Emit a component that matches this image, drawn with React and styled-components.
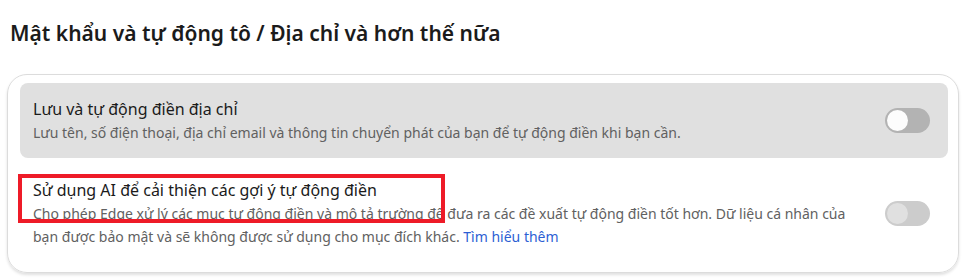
import styled, { createGlobalStyle } from "styled-components";

const GlobalStyle = createGlobalStyle`
  html, body {
    margin: 0;
    padding: 0;
    background: #ffffff;
    font-family: "Noto Sans", "Open Sans", sans-serif;
  }
`;

const settings = [
  {
    id: "address",
    title: "Lưu và tự động điền địa chỉ",
    desc: "Lưu tên, số điện thoại, địa chỉ email và thông tin chuyển phát của bạn để tự động điền khi bạn cần.",
    hovered: true,
  },
  {
    id: "ai",
    title: "Sử dụng AI để cải thiện các gợi ý tự động điền",
    desc: "Cho phép Edge xử lý các mục tự động điền và mô tả trường để đưa ra các đề xuất tự động điền tốt hơn. Dữ liệu cá nhân của bạn được bảo mật và sẽ không được sử dụng cho mục đích khác.",
    link: "Tìm hiểu thêm",
    highlighted: true,
  },
];

export default function App() {
  return (
    <>
      <GlobalStyle />
      <StyledPage>
        <StyledHeading>Mật khẩu và tự động tô / Địa chỉ và hơn thế nữa</StyledHeading>
        <StyledCard>
          {settings.map((item) => (
            <StyledRow key={item.id} $hovered={item.hovered}>
              <StyledTextBlock>
                <StyledRowTitle>{item.title}</StyledRowTitle>
                <StyledRowDesc>
                  {item.desc}
                  {item.link && (
                    <>
                      {" "}
                      <StyledLink href="#">{item.link}</StyledLink>
                    </>
                  )}
                </StyledRowDesc>
              </StyledTextBlock>
              <StyledToggle $hovered={item.hovered}>
                <StyledKnob $hovered={item.hovered} />
              </StyledToggle>
              {item.highlighted && <StyledHighlight />}
            </StyledRow>
          ))}
        </StyledCard>
      </StyledPage>
    </>
  );
}

const StyledPage = styled.div`
  width: 964px;
  height: 279px;
  padding: 13px 5px 0 7px;
  box-sizing: border-box;
`;

const StyledHeading = styled.h1`
  margin: 0 0 21px 3px;
  font-size: 21px;
  line-height: 40px;
  font-weight: 600;
  color: #1b1b1b;
`;

const StyledCard = styled.section`
  width: 952px;
  height: 199px;
  box-sizing: border-box;
  padding: 8px 10px 0 12px;
  border: 1px solid #dcdcdc;
  border-radius: 20px;
  box-shadow: 0 2px 3px rgba(0, 0, 0, 0.12);
  display: flex;
  flex-direction: column;
`;

const StyledRow = styled.div`
  position: relative;
  display: flex;
  align-items: center;
  justify-content: space-between;
  gap: 24px;
  padding: ${(p) => (p.$hovered ? "0 18px 0 13px" : "20px 18px 0 13px")};
  height: ${(p) => (p.$hovered ? "75px" : "auto")};
  background: ${(p) => (p.$hovered ? "#e0e0e0" : "transparent")};
  border-radius: 8px;
`;

const StyledTextBlock = styled.div`
  display: flex;
  flex-direction: column;
  max-width: 822px;
`;

const StyledRowTitle = styled.div`
  font-size: 16px;
  line-height: 24px;
  color: #1b1b1b;
`;

const StyledRowDesc = styled.div`
  font-size: 14px;
  line-height: 23px;
  color: #616161;
`;

const StyledLink = styled.a`
  color: #2d5fd4;
  text-decoration: none;
`;

const StyledToggle = styled.div`
  flex: none;
  width: 45px;
  height: 25px;
  border-radius: 13px;
  background: ${(p) => (p.$hovered ? "#b3b3b3" : "#cccccc")};
  display: flex;
  align-items: center;
  padding-left: 2px;
  box-sizing: border-box;
`;

const StyledKnob = styled.span`
  width: 21px;
  height: 21px;
  border-radius: 50%;
  background: ${(p) => (p.$hovered ? "#fdfdfd" : "#e0e0e0")};
`;

const StyledHighlight = styled.div`
  position: absolute;
  left: -2px;
  top: 16px;
  width: 427px;
  height: 49px;
  box-sizing: border-box;
  border: 4px solid #ee1b28;
  pointer-events: none;
`;
